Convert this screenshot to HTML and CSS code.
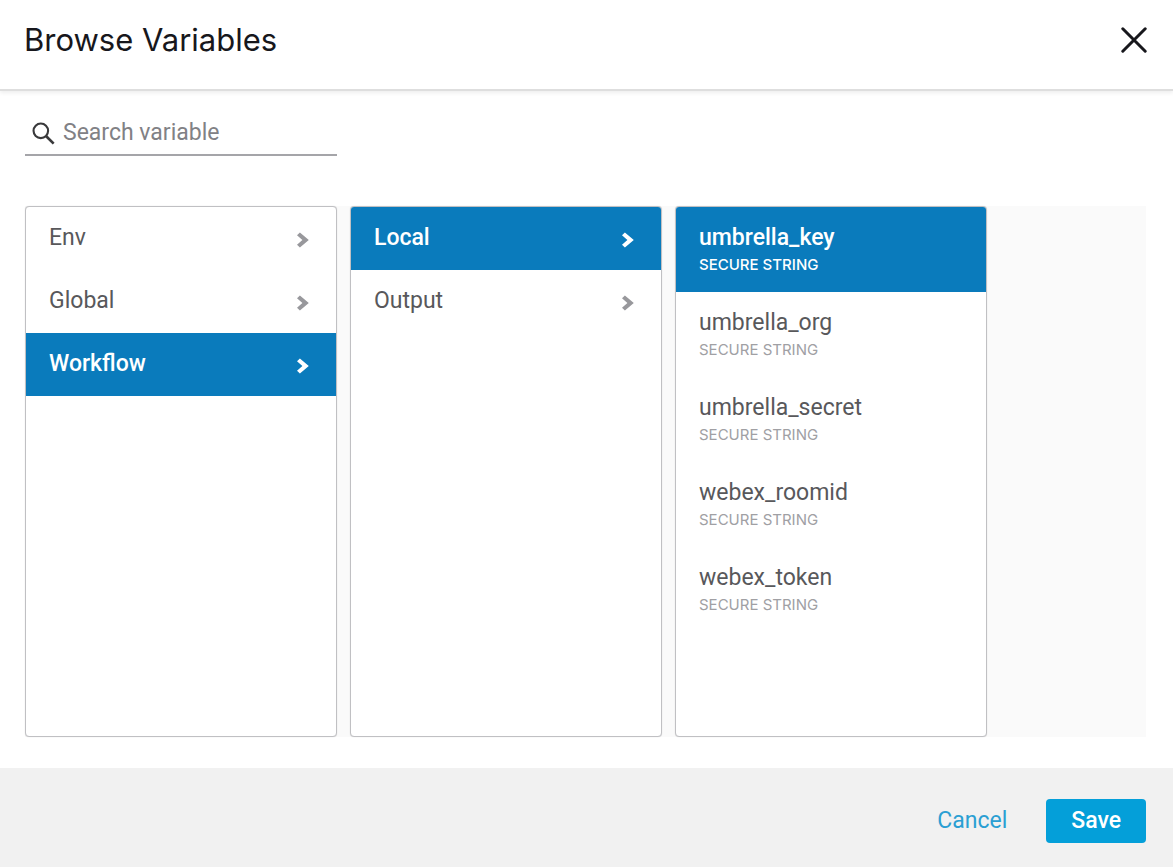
FILE: index.html
```html
<!DOCTYPE html>
<html lang="en">
<head>
<meta charset="utf-8">
<meta name="viewport" content="width=device-width, initial-scale=1">
<title>Browse Variables</title>
<link rel="stylesheet" href="styles.css">
</head>
<body>
<svg class="sprite" aria-hidden="true">
  <symbol id="chevron" viewBox="0 0 14 16"><path d="M1 3.2 3.9 0.4 12.8 8 3.9 15.6 1 12.8 6.4 8Z" fill="currentColor"/></symbol>
</svg>
<div class="dialog" role="dialog" aria-labelledby="dialog-title">
  <header class="dialog-header">
    <h1 class="dialog-title" id="dialog-title">Browse Variables</h1>
    <button class="close-button" type="button" aria-label="Close">
      <svg class="close-icon" viewBox="0 0 26 26" aria-hidden="true"><path d="M1.8 1.8 24.2 24.2M24.2 1.8 1.8 24.2" fill="none" stroke="currentColor" stroke-width="3" stroke-linecap="round"/></svg>
    </button>
  </header>
  <main class="dialog-body">
    <label class="search">
      <svg class="search-icon" viewBox="0 0 24 24" aria-hidden="true"><circle cx="9.2" cy="9.2" r="7.6" fill="none" stroke="currentColor" stroke-width="2.2"/><path d="M14.6 14.6 22.6 22.6" fill="none" stroke="currentColor" stroke-width="2.8"/></svg>
      <input class="search-input" type="text" placeholder="Search variable" aria-label="Search variable">
    </label>
    <div class="browser">
      <div class="column">
        <button class="item" type="button"><span>Env</span><svg class="chevron" aria-hidden="true"><use href="#chevron"/></svg></button>
        <button class="item" type="button"><span>Global</span><svg class="chevron" aria-hidden="true"><use href="#chevron"/></svg></button>
        <button class="item selected" type="button"><span>Workflow</span><svg class="chevron" aria-hidden="true"><use href="#chevron"/></svg></button>
      </div>
      <div class="column">
        <button class="item selected" type="button"><span>Local</span><svg class="chevron" aria-hidden="true"><use href="#chevron"/></svg></button>
        <button class="item" type="button"><span>Output</span><svg class="chevron" aria-hidden="true"><use href="#chevron"/></svg></button>
      </div>
      <div class="column">
        <button class="item variable selected" type="button"><span>umbrella_key</span><span class="type">SECURE STRING</span></button>
        <button class="item variable" type="button"><span>umbrella_org</span><span class="type">SECURE STRING</span></button>
        <button class="item variable" type="button"><span>umbrella_secret</span><span class="type">SECURE STRING</span></button>
        <button class="item variable" type="button"><span>webex_roomid</span><span class="type">SECURE STRING</span></button>
        <button class="item variable" type="button"><span>webex_token</span><span class="type">SECURE STRING</span></button>
      </div>
    </div>
  </main>
  <footer class="dialog-footer">
    <button class="button" type="button">Cancel</button>
    <button class="button primary" type="button">Save</button>
  </footer>
</div>
</body>
</html>
```
FILE: styles.css
```css
* {
  box-sizing: border-box;
}

body {
  margin: 0;
  background: #fff;
  color: #58585b;
  font-family: Roboto, "Liberation Sans", sans-serif;
  font-size: 23px;
  line-height: 28px;
}

button,
input {
  margin: 0;
  padding: 0;
  border: 0;
  background: none;
  color: inherit;
  font: inherit;
}

button {
  cursor: pointer;
}

.sprite {
  display: none;
}

.dialog {
  display: flex;
  flex-direction: column;
  min-height: 100vh;
}

.dialog-header {
  display: flex;
  align-items: center;
  justify-content: space-between;
  padding: 19px 26px 29px 24px;
  border-bottom: 2px solid #dedede;
  box-shadow: 0 2px 4px rgba(0, 0, 0, 0.07);
}

.dialog-title {
  margin: 0;
  color: #17171c;
  font-family: Inter, "Liberation Sans", sans-serif;
  font-size: 31px;
  font-weight: 400;
  line-height: 41px;
}

.close-button {
  display: flex;
  color: #17171c;
}

.close-icon {
  width: 26px;
  height: 26px;
}

.dialog-body {
  display: flex;
  flex: 1;
  flex-direction: column;
  gap: 50px;
  padding: 28px 27px 31px 25px;
}

.search {
  display: flex;
  align-items: center;
  gap: 8px;
  width: 100%;
  max-width: 312px;
  padding: 0 7px 7px;
  border-bottom: 2px solid #a5a5a9;
}

.search-icon {
  flex: none;
  width: 23px;
  height: 23px;
  color: #39393b;
}

.search-input {
  flex: 1;
  min-width: 0;
  outline: 0;
}

.search-input::placeholder {
  color: #818185;
  opacity: 1;
}

.browser {
  display: grid;
  flex: 1;
  grid-template-columns: repeat(3, minmax(0, 312px));
  gap: 13px;
  background: #fafafa;
}

.column {
  overflow: hidden;
  border: 1px solid #c0c0c3;
  border-radius: 4px;
  background: #fff;
  box-shadow: 0 0 1px rgba(0, 0, 0, 0.2);
}

.item {
  display: flex;
  align-items: center;
  justify-content: space-between;
  width: 100%;
  padding: 17px 26px 18px 23px;
  text-align: left;
}

.variable {
  flex-direction: column;
  align-items: flex-start;
  padding-bottom: 14px;
}

.type {
  color: #a0a0a4;
  font-family: Inter, "Liberation Sans", sans-serif;
  font-size: 15px;
  line-height: 26px;
}

.selected {
  background: #0a7bbc;
  color: #fff;
  font-weight: 500;
}

.selected .type {
  color: #fff;
}

.chevron {
  width: 14px;
  height: 16px;
  margin-top: 3px;
  color: #98989c;
}

.selected .chevron {
  color: #fff;
}

.dialog-footer {
  display: flex;
  justify-content: flex-end;
  gap: 14px;
  padding: 31px 27px 24px;
  background: #f1f1f1;
}

.button {
  padding: 8px 25px;
  border-radius: 4px;
  color: #2b9fd3;
}

.primary {
  background: #049fd9;
  color: #fff;
  font-weight: 500;
}
```
